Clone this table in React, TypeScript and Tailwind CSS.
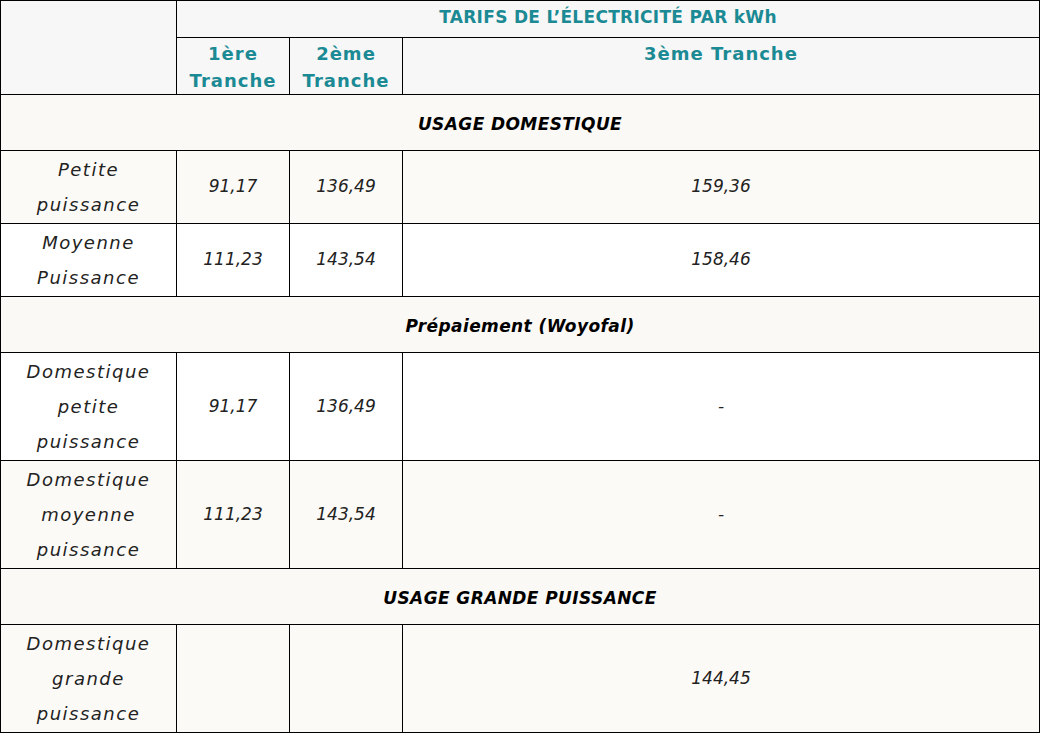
import React from "react";

const font = { fontFamily: '"DejaVu Sans", "Noto Sans", sans-serif' };

interface Row {
  label: string[];
  t1: string;
  t2: string;
  t3: string;
  cream: boolean;
}

const domestique: Row[] = [
  { label: ["Petite", "puissance"], t1: "91,17", t2: "136,49", t3: "159,36", cream: true },
  { label: ["Moyenne", "Puissance"], t1: "111,23", t2: "143,54", t3: "158,46", cream: false },
];

const prepaiement: Row[] = [
  { label: ["Domestique", "petite", "puissance"], t1: "91,17", t2: "136,49", t3: "-", cream: false },
  { label: ["Domestique", "moyenne", "puissance"], t1: "111,23", t2: "143,54", t3: "-", cream: true },
];

const grande: Row[] = [
  { label: ["Domestique", "grande", "puissance"], t1: "", t2: "", t3: "144,45", cream: true },
];

function Section({ title }: { title: string }) {
  return (
    <tr className="bg-[#fbf9f5]">
      <td
        colSpan={4}
        className="h-[56px] border border-black pt-[4px] text-center align-middle text-[17px] font-bold italic tracking-[0.4px] text-black"
      >
        {title}
      </td>
    </tr>
  );
}

// value cells share the same look
const valueCell =
  "border border-black text-center align-middle text-[17px] italic text-[#222]";

function DataRow({ row }: { row: Row }) {
  return (
    <tr className={row.cream ? "bg-[#fcfaf6]" : "bg-white"}>
      <td className="border border-black px-1 py-px text-center align-middle text-[18px] italic leading-[35px] tracking-[1.5px] text-[#222]">
        {row.label.map((l) => (
          <div key={l}>{l}</div>
        ))}
      </td>
      <td className={valueCell}>{row.t1}</td>
      <td className={valueCell}>{row.t2}</td>
      <td className={valueCell}>{row.t3}</td>
    </tr>
  );
}

export default function App() {
  return (
    <div className="min-h-screen bg-white" style={font}>
      <table className="w-[1040px] table-fixed border-collapse">
        <colgroup>
          <col className="w-[176px]" />
          <col className="w-[113px]" />
          <col className="w-[113px]" />
          <col />
        </colgroup>
        <thead>
          <tr className="bg-[#f7f7f7]">
            <td rowSpan={2} className="border border-black" />
            <th
              colSpan={3}
              className="h-[37px] border border-black pb-[3px] text-center align-middle text-[17px] font-bold tracking-[0.3px] text-[#1b8a94]"
            >
              TARIFS DE L’ÉLECTRICITÉ PAR kWh
            </th>
          </tr>
          <tr className="bg-[#f7f7f7]">
            <th className="h-[55px] border border-black pt-[2px] text-center align-top text-[18px] font-bold leading-[27px] tracking-[1px] text-[#1b8a94]">
              1ère
              <br />
              Tranche
            </th>
            <th className="border border-black pt-[2px] text-center align-top text-[18px] font-bold leading-[27px] tracking-[1px] text-[#1b8a94]">
              2ème
              <br />
              Tranche
            </th>
            <th className="border border-black pt-[2px] text-center align-top text-[18px] font-bold leading-[27px] tracking-[1px] text-[#1b8a94]">
              3ème Tranche
            </th>
          </tr>
        </thead>
        <tbody>
          <Section title="USAGE DOMESTIQUE" />
          {domestique.map((r) => (
            <DataRow key={r.label.join(" ")} row={r} />
          ))}
          <Section title="Prépaiement (Woyofal)" />
          {prepaiement.map((r) => (
            <DataRow key={r.label.join(" ")} row={r} />
          ))}
          <Section title="USAGE GRANDE PUISSANCE" />
          {grande.map((r) => (
            <DataRow key={r.label.join(" ")} row={r} />
          ))}
        </tbody>
      </table>
    </div>
  );
}
